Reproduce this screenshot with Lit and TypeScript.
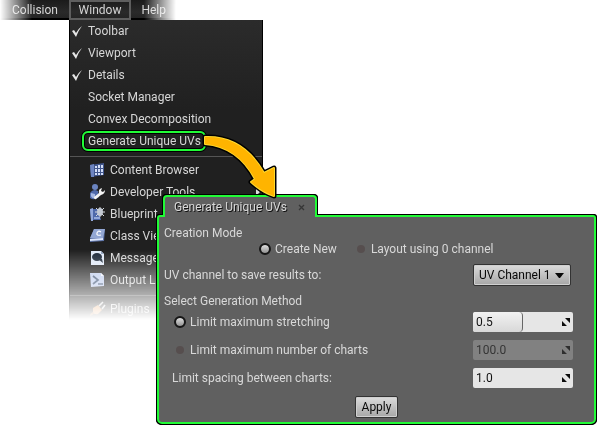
import { LitElement, html, css, svg, nothing } from "lit";
import { customElement, property } from "lit/decorators.js";

const icons: Record<string, unknown> = {
  content: svg`<path d="M0 3 14 1v12L1 15z" fill="#41568c"/><path d="M0 3l4-1v13H1z" fill="#6d84c0"/>
    <path d="M5 4h2v2H5zM8 3h2v3H8zM11 3h2v3h-2zM5 7h2v3H5zM8 7h2v3H8zM11 7h2v3h-2zM5 11h2v2H5zM8 11h2v2H8zM11 11h2v2h-2z" fill="#d3def7"/>`,
  tools: svg`<circle cx="5" cy="3" r="3" fill="#6b84c0"/><path d="M0 9q3-5 8-2l1 6q-5 4-9 1z" fill="#4f69aa"/><path d="M1 9l4 1v4q-5 1-4-5" fill="#a5b7e2"/>
    <path d="M4 13 9 9q-1-4 3-5l-1 3 2 1 2-2q0 4-4 5L6 15q-2 1-2-2" fill="#f3f3f3"/>`,
  blueprint: svg`<path d="M0 3h8l3 11H1z" fill="#4f69aa"/><path d="M0 3l3-1v13H1zM4 11h6v2H4z" fill="#93a8da"/>
    <path d="M6 2l8 8M14 2 6 10M5 6h10M10 1v10" stroke="#d6d9de" stroke-width="1"/><ellipse cx="10" cy="6" rx="3" ry="4" fill="#c4cad4"/>`,
  classes: svg`<path d="M4 1h11l-1 12-14 1v-3z" fill="#5c73a8"/><path d="M4 1h11l-2 9H0z" fill="#93a7d3"/><path d="M0 11l13-1v2L0 13z" fill="#dde6fb"/>
    <path d="M11 4Q8 2 7 5t4 2" fill="none" stroke="#fff" stroke-width="1.2"/>`,
  message: svg`<path d="M1 1h10l3 3v11H1z" fill="#dfe8f6"/><path d="M11 1v3h3z" fill="#91a3c0"/><ellipse cx="7" cy="7" rx="5" ry="4" fill="#1c2838"/><path d="M8 9h4l1 4z" fill="#1c2838"/>`,
  output: svg`<path d="M0 1h11l3 3v10l-13 1z" fill="#bccbed"/><path d="M11 1v3h3z" fill="#f3f6ff"/><path d="M3 4l5 4-5 4M8 12h5" fill="none" stroke="#334a6e" stroke-width="1.7"/>`,
  plugins: svg`<path d="M0 15q0-3 3-4l2 1q-2 2-5 3" fill="#a8622b"/><path d="M3 7l5-3 4 5-4 4q-4 1-5-2z" fill="#e79a57"/><path d="M9 5l4-4M12 8l3-4" stroke="#ddd" stroke-width="1.6"/>`,
};

interface Item { label: string; icon?: string; checked?: boolean; marked?: boolean; sub?: boolean }

const groups: Item[][] = [
  [
    { label: "Toolbar", checked: true },
    { label: "Viewport", checked: true },
    { label: "Details", checked: true },
    { label: "Socket Manager" },
    { label: "Convex Decomposition" },
    { label: "Generate Unique UVs", marked: true },
  ],
  [
    { label: "Content Browser", icon: "content" },
    { label: "Developer Tools", icon: "tools", sub: true },
    { label: "Blueprint", icon: "blueprint" },
    { label: "Class Viewer", icon: "classes" },
    { label: "Message Log", icon: "message" },
    { label: "Output Log", icon: "output" },
  ],
  [{ label: "Plugins", icon: "plugins" }],
];

@customElement("window-menu")
export class WindowMenu extends LitElement {
  static styles = css`
    :host { display: block; }
    button {
      font: inherit; color: inherit; background: none; border: 0; margin: 0; padding: 0;
      text-align: left; white-space: nowrap;
    }
    .bar {
      display: flex; width: 176px; height: 20px; color: #d4d4d4;
      background: linear-gradient(#1b1b1b, #2a2a2a 12px, #242424 18px, #000 18px);
      -webkit-mask-image: linear-gradient(90deg, transparent, #000 32px, #000 144px, transparent);
      mask-image: linear-gradient(90deg, transparent, #000 32px, #000 144px, transparent);
    }
    .bar button { padding: 0 10px; }
    .bar button:first-child { padding-left: 12px; width: 69px; }
    .bar .open { width: 63px; border: 2px solid #5e5e5e; padding: 0 8px; height: 20px; }
    .menu {
      width: 194px; box-sizing: border-box; margin-left: 69px; color: #d6d6d6;
      border: solid #000; border-width: 0 1px;
      background: linear-gradient(#2b2b2b, #202020 90px);
      -webkit-mask-image: linear-gradient(#000 230px, transparent 300px);
      mask-image: linear-gradient(#000 230px, transparent 300px);
    }
    .group + .group { border-top: 1px solid #555; margin-top: 4px; padding-top: 2px; }
    .item { display: flex; align-items: center; width: 100%; height: 22px; }
    .tick { width: 18px; display: flex; }
    .icon { width: 20px; display: flex; margin-left: 2px; }
    .label { position: relative; flex: none; }
    .marked::after {
      content: ""; position: absolute; inset: -2px -5px -2px -6px;
      border: 2px solid #20fb36; border-radius: 6px;
      box-shadow: 0 0 0 1px #000, inset 0 0 0 1px #000;
    }
    .sub { margin: 0 2px 0 auto; }
  `;

  private item(i: Item) {
    return html`<button class="item" role="menuitem">
      <span class="tick">${i.checked
        ? html`<svg width="14" height="14" viewBox="0 0 14 14"><path d="M2 7 4 6l2 3q3-5 6-7Q8 7 6 13z" fill="#e6e6e6"/></svg>`
        : nothing}</span>
      ${i.icon ? html`<span class="icon"><svg width="16" height="16" viewBox="0 0 16 16">${icons[i.icon]}</svg></span>` : nothing}
      <span class="label ${i.marked ? "marked" : ""}">${i.label}</span>
      ${i.sub ? html`<svg class="sub" width="4" height="8" viewBox="0 0 4 8"><path d="M0 0 4 4 0 8z" fill="#ddd"/></svg>` : nothing}
    </button>`;
  }

  render() {
    return html`
      <nav class="bar"><button>Collision</button><button class="open">Window</button><button>Help</button></nav>
      <div class="menu" role="menu">${groups.map((g) => html`<div class="group">${g.map((i) => this.item(i))}</div>`)}</div>`;
  }
}

@customElement("spin-field")
export class SpinField extends LitElement {
  @property() value = "";
  @property() label = "";
  @property({ type: Number }) fill = 0;
  @property({ type: Boolean }) disabled = false;

  static styles = css`
    :host { display: block; width: 100px; }
    .box { position: relative; display: flex; height: 20px; border-radius: 2px; background: #e6e6e6; overflow: hidden; }
    .off { background: #818181; }
    .fill {
      position: absolute; inset: 0 auto 0 0; box-sizing: border-box;
      background: linear-gradient(#f2f2f2, #d8d8d8); border-right: 1px solid #666; border-radius: 2px 4px 4px 2px;
    }
    input {
      position: relative; flex: 1; min-width: 0; border: 0; padding: 0 0 0 3px; background: none;
      font: inherit; color: #111; outline: none;
    }
    input:disabled { color: #353535; }
    svg { position: relative; margin: 6px 3px 0 0; fill: #0c0c0c; flex: none; }
    .off svg { fill: #2e2e2e; }
  `;

  render() {
    return html`<div class="box ${this.disabled ? "off" : ""}">
      ${this.fill ? html`<span class="fill" style="width:${this.fill}%"></span>` : nothing}
      <input type="text" aria-label=${this.label} .value=${this.value} ?disabled=${this.disabled} />
      <svg width="8" height="8" viewBox="0 0 8 8"><path d="M3 0h5v5zM0 3v5h5z"/></svg>
    </div>`;
  }
}

@customElement("uv-dialog")
export class UvDialog extends LitElement {
  static styles = css`
    :host {
      display: block; color: #d8d8d8;
      filter: drop-shadow(1px 0 0 #000) drop-shadow(-1px 0 0 #000) drop-shadow(0 1px 0 #000) drop-shadow(0 -1px 0 #000);
    }
    .tab {
      position: relative; z-index: 1; display: flex; align-items: center; box-sizing: border-box;
      width: 154px; height: 22px; margin: 0 0 -2px 6px; padding: 0 10px 0 9px;
      background: #606060; border: 2px solid #20fb36; border-bottom: 0; border-radius: 4px 4px 0 0;
      line-height: 18px; text-shadow: 1px 1px 0 #111; white-space: nowrap;
    }
    .close { margin-left: auto; border: 0; padding: 0; background: none; display: flex; }
    .body {
      background: #606060; border: 2px solid #20fb36; border-radius: 3px 3px 5px 5px;
      padding: 8px 21px 4px 5px; display: flex; flex-direction: column;
    }
    .row { display: flex; align-items: center; height: 20px; margin-bottom: 8px; }
    .row > label, .row > span { white-space: nowrap; }
    .head { height: 16px; line-height: 16px; }
    .method { margin-bottom: 3px; }
    .modes { height: 16px; margin-bottom: 7px; padding-left: 95px; gap: 18px; }
    .channel { height: 22px; margin-bottom: 7px; }
    .opt { display: flex; align-items: center; gap: 4px; }
    .inset { padding-left: 10px; }
    .spacing { padding-left: 8px; }
    .end { margin-left: auto; flex: none; }
    input[type="radio"] {
      appearance: none; margin: 0; width: 12px; height: 12px; border-radius: 50%; box-sizing: border-box;
      border: 2px solid transparent; background: #564e4e padding-box;
    }
    input[type="radio"]:checked { border-color: #161616; background: linear-gradient(#dedede, #929292) padding-box; }
    .pick { position: relative; margin-right: 2px; }
    .pick svg { position: absolute; right: 7px; top: 9px; pointer-events: none; }
    select, .apply {
      appearance: none; font: inherit; color: #080808; box-sizing: border-box; display: block;
      border: 1px solid #333; border-radius: 2px; background: linear-gradient(#dcdcdc, #a6a6a6);
      box-shadow: inset 0 0 0 1px #d0d0d0;
    }
    select { width: 98px; height: 22px; padding: 0 16px 0 5px; }
    .apply { width: 43px; height: 22px; padding: 0; align-self: center; margin-left: 16px; }
  `;

  render() {
    return html`
      <div class="tab"><span>Generate Unique UVs</span>
        <button class="close" aria-label="Close"><svg width="7" height="7" viewBox="0 0 7 7"><path d="M1 1l5 5M6 1 1 6" stroke="#363636" stroke-width="1.3"/></svg></button>
      </div>
      <form class="body" @submit=${(e: Event) => e.preventDefault()}>
        <div class="head">Creation Mode</div>
        <div class="row modes">
          <label class="opt"><input type="radio" name="mode" checked />Create New</label>
          <label class="opt"><input type="radio" name="mode" />Layout using 0 channel</label>
        </div>
        <div class="row channel">
          <label for="channel">UV channel to save results to:</label>
          <span class="pick end"><select id="channel"><option>UV Channel 1</option></select>
            <svg width="9" height="5" viewBox="0 0 9 5"><path d="M0 0h9L5 5H4z" fill="#080808"/></svg></span>
        </div>
        <div class="head method">Select Generation Method</div>
        <div class="row inset">
          <label class="opt"><input type="radio" name="method" checked />Limit maximum stretching</label>
          <spin-field class="end" label="Limit maximum stretching" value="0.5" fill="50"></spin-field>
        </div>
        <div class="row inset">
          <label class="opt"><input type="radio" name="method" />Limit maximum number of charts</label>
          <spin-field class="end" label="Limit maximum number of charts" value="100.0" disabled></spin-field>
        </div>
        <div class="row spacing">
          <span>Limit spacing between charts:</span>
          <spin-field class="end" label="Limit spacing between charts" value="1.0"></spin-field>
        </div>
        <button class="apply">Apply</button>
      </form>`;
  }
}

@customElement("app-root")
export class AppRoot extends LitElement {
  static styles = css`
    :host { display: block; position: relative; min-height: 100vh; overflow: hidden; background: #fff; font: 12px/16px Roboto, "Liberation Sans", sans-serif; }
    .dialog { position: absolute; left: 157px; right: 2px; top: 195px; }
    .arrow { position: absolute; left: 200px; top: 130px; }
  `;

  render() {
    const shape = "M5 7C30 6 50 18 64 43L74 38V66Q62 62 51 52L55 49C46 32 30 16 5 14Z";
    return html`
      <window-menu></window-menu>
      <uv-dialog class="dialog"></uv-dialog>
      <svg class="arrow" width="84" height="72" viewBox="0 0 84 72" stroke-linejoin="round">
        <path d=${shape} fill="#000" stroke="#000" stroke-width="5"/>
        <path d=${shape} fill="#ffb400" stroke="#ffd92e" stroke-width="2"/>
        <path d=${shape} fill="#ffb400"/>
      </svg>`;
  }
}
